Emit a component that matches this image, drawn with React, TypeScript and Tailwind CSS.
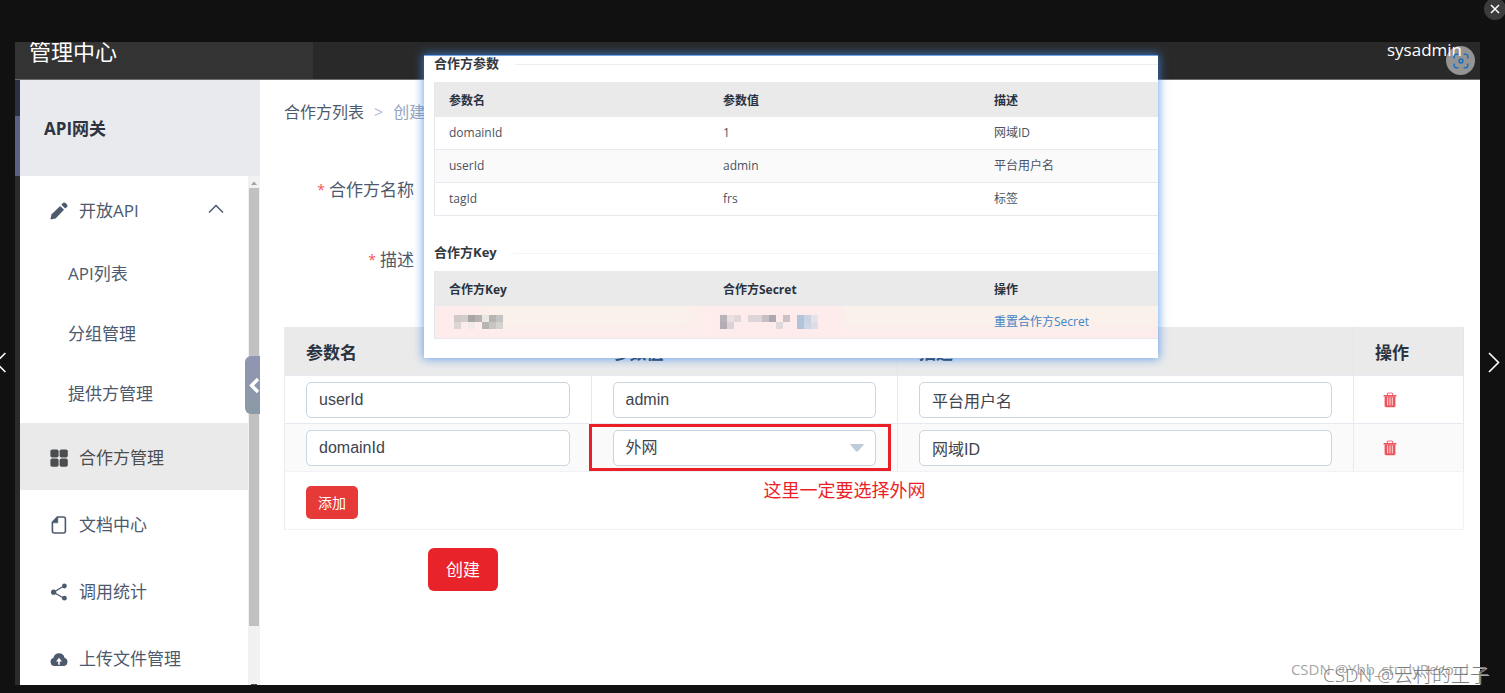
import React, { useState } from 'react';

interface Param {
  name: string;
  value: string;
  desc: string;
}

const SANS = "font-['Open_Sans','Noto_Sans_CJK_SC',sans-serif]";
const FIELD =
  "block w-full h-9 rounded-[5px] border border-[#c9d5e1] bg-white px-3 text-base text-[#40444d] outline-none font-['Liberation_Sans','Noto_Sans_CJK_SC',sans-serif]";

const SUB_ITEMS = ['API列表', '分组管理', '提供方管理'];

const PARTNER_PARAMS: Param[] = [
  { name: 'domainId', value: '1', desc: '网域ID' },
  { name: 'userId', value: 'admin', desc: '平台用户名' },
  { name: 'tagId', value: 'frs', desc: '标签' },
];

// [column, row, colour] of each masked cell
const KEY_MASK: [number, number, string][] = [
  [0, 0, '#d2c8ca'], [1, 0, '#d4cdce'], [2, 0, '#a7a6a5'], [3, 0, '#b5b3b2'], [4, 0, '#ebe7e2'], [5, 0, '#b5b4b3'], [6, 0, '#c5c4c2'],
  [0, 1, '#dcd5d6'], [2, 1, '#f0ebe9'], [4, 1, '#b6b5b1'], [5, 1, '#c8c5c2'], [6, 1, '#d5d3cf'],
];

const SECRET_MASK: [number, number, string][] = [
  [0, 0, '#b9b2b8'], [1, 0, '#ebdfe1'], [2, 0, '#e2d8da'], [4, 0, '#dfd4d7'], [5, 0, '#dfd4d7'], [6, 0, '#c6bfc5'], [7, 0, '#aaa8b0'],
  [9, 0, '#c9c1c6'], [11, 0, '#b2c4dc'], [12, 0, '#c9d3e4'], [13, 0, '#e6e2ea'],
  [0, 1, '#b5adb4'], [1, 1, '#dcd3d7'], [8, 1, '#e1d8dc'], [11, 1, '#b2c4dc'], [12, 1, '#cfd6e6'], [13, 1, '#dddde8'],
];

function Mask({ cells, cols, className }: { cells: [number, number, string][]; cols: number; className: string }) {
  return (
    <svg className={className} width={cols * 7} height={14} viewBox={`0 0 ${cols * 7} 14`} aria-hidden="true">
      {cells.map(([x, y, fill]) => (
        <rect key={`${x}-${y}`} x={x * 7} y={y * 7} width={7} height={7} fill={fill} />
      ))}
    </svg>
  );
}

function PencilIcon() {
  return (
    <svg width="18" height="18" viewBox="0 0 18 18" fill="currentColor">
      <path d="M0.4 17.6l1-5.2L10.2 4l3.8 3.8L5.6 16.4z" />
      <path d="M11.4 2.8l1-1.2a2.4 2.4 0 0 1 3.6-.2l.6.6a2.4 2.4 0 0 1-.2 3.6l-1.2 1z" />
    </svg>
  );
}

function GridIcon() {
  return (
    <svg width="18" height="18" viewBox="0 0 18 18" fill="currentColor">
      <rect x="0.4" y="0.4" width="8.2" height="8.2" rx="1.8" />
      <rect x="9.6" y="0.4" width="8.2" height="8.2" rx="1.8" />
      <rect x="0.4" y="9.6" width="8.2" height="8.2" rx="1.8" />
      <rect x="9.6" y="9.6" width="8.2" height="8.2" rx="1.8" />
    </svg>
  );
}

function DocIcon() {
  return (
    <svg width="18" height="18" viewBox="0 0 18 18" fill="none" stroke="currentColor" strokeWidth="1.6">
      <path d="M7.4 1h6a2 2 0 0 1 2 2v12a2 2 0 0 1-2 2H4.4a2 2 0 0 1-2-2V6.4z" />
      <path d="M7.8 1v5.8H2.2z" fill="currentColor" strokeWidth="0.6" />
    </svg>
  );
}

function ShareIcon() {
  return (
    <svg width="18" height="18" viewBox="0 0 18 18" fill="currentColor">
      <path d="M14 3L3.6 9.2 14 15.2" fill="none" stroke="currentColor" strokeWidth="1.3" />
      <circle cx="14.4" cy="3" r="2.4" />
      <circle cx="3.6" cy="9.2" r="2.6" />
      <circle cx="14.4" cy="15.2" r="2.4" />
    </svg>
  );
}

function CloudIcon() {
  return (
    <svg width="18" height="18" viewBox="0 0 18 18">
      <path d="M4.4 16a4.2 4.2 0 0 1-.9-8.2 5.6 5.6 0 0 1 11 0 4.2 4.2 0 0 1-.9 8.2z" fill="currentColor" />
      <path d="M9 7.8l3 3.8h-2.2v3.2H8.2v-3.2H6z" fill="#fff" />
    </svg>
  );
}

function TrashIcon() {
  return (
    <svg width="14" height="16" viewBox="0 0 14 16" fill="none">
      <path d="M4.4 3.2V1.9a.9.9 0 0 1 .9-.9h3.4a.9.9 0 0 1 .9.9v1.3" stroke="#f2707a" strokeWidth="1.2" />
      <path d="M0.6 3h12.8v1.6H0.6z" fill="#ef5561" />
      <path d="M1.6 4.5h10.8v9.2a1.6 1.6 0 0 1-1.6 1.6H3.2a1.6 1.6 0 0 1-1.6-1.6z" fill="#ef5561" />
      <path d="M4.7 5.4v8M7 5.4v8M9.3 5.4v8" stroke="#fbdcd8" strokeWidth="1" />
    </svg>
  );
}

const MENU = [
  { label: '合作方管理', icon: <GridIcon />, active: true },
  { label: '文档中心', icon: <DocIcon />, active: false },
  { label: '调用统计', icon: <ShareIcon />, active: false },
  { label: '上传文件管理', icon: <CloudIcon />, active: false },
];

function Sidebar() {
  return (
    <aside className="relative flex w-60 shrink-0 flex-col bg-white text-[17px] text-[#4d5a6e]">
      <div className="flex h-24 shrink-0 items-center bg-[#e9eaee] px-6 pt-0.5 font-bold text-[#2d3440]">API网关</div>
      <div className="flex min-h-0 flex-1">
        <nav className="min-w-0 flex-1 overflow-hidden">
          <button type="button" className="flex h-[67px] w-full items-center gap-[11px] pl-[30px] pr-6 pt-0.5">
            <PencilIcon />
            <span>开放API</span>
            <svg className="mb-1 ml-auto" width="16" height="10" viewBox="0 0 16 10" fill="none" stroke="#4d5a6e" strokeWidth="1.5">
              <path d="M1 8.5L8 1.5l7 7" />
            </svg>
          </button>
          {SUB_ITEMS.map(item => (
            <a key={item} href="#" className="flex h-[60px] items-center pl-12 pt-0.5">{item}</a>
          ))}
          {MENU.map(item => (
            <a
              key={item.label}
              href="#"
              className={`flex h-[67px] items-center gap-[11px] pl-[30px] pt-0.5 ${item.active ? 'bg-[#eaeaea] text-[#4b4d50]' : ''}`}
            >
              {item.icon}
              <span>{item.label}</span>
            </a>
          ))}
        </nav>
        {/* Scrollbar */}
        <div className="flex w-3 shrink-0 flex-col items-center bg-[#f1f1f1]">
          <svg className="shrink-0" width="12" height="12" viewBox="0 0 12 12">
            <path d="M3 9l3-3.6L9 9z" fill="#a3a3a3" />
          </svg>
          <div className="h-[86%] w-2.5 bg-[#c1c1c1]" />
          <div className="mt-auto h-px w-1.5 bg-[#505050]" />
        </div>
      </div>
      {/* Collapse handle */}
      <button
        type="button"
        aria-label="收起"
        className="absolute right-0 top-[276px] flex h-[58px] w-[15px] items-center justify-end rounded-l-md bg-linear-to-b from-[#9095b2] to-[#8b9aa6]"
      >
        <svg width="12" height="18" viewBox="0 0 12 18" fill="none" stroke="#fff" strokeWidth="3.4">
          <path d="M10 3L3.6 9.5l6.4 6.5" />
        </svg>
      </button>
    </aside>
  );
}

function ParamTable() {
  const [network, setNetwork] = useState('外网');
  const th = 'h-12 pl-[21px] pt-1 font-bold';
  const cell = 'h-12 border-r border-t border-[#e4eaf0] pb-0 pl-[21px] pr-[21px] pt-px';

  return (
    <table className="w-full table-fixed border-separate border-spacing-0 border-l border-[#e9edf2] text-left">
      <colgroup>
        <col className="w-[26%]" />
        <col className="w-[26%]" />
        <col />
        <col className="w-[110px]" />
      </colgroup>
      <thead className="bg-[#eaeaea] text-[17px] text-[#2a3342]">
        <tr>
          <th className={th}>参数名</th>
          <th className={`${th} border-r border-[#e0e5ec]`}>参数值</th>
          <th className={`${th} border-r border-[#e0e5ec]`}>描述</th>
          <th className={`${th} border-r border-[#e0e5ec]`}>操作</th>
        </tr>
      </thead>
      <tbody>
        <tr>
          <td className={cell}><input aria-label="参数名" className={FIELD} defaultValue="userId" /></td>
          <td className={cell}><input aria-label="参数值" className={FIELD} defaultValue="admin" /></td>
          <td className={cell}><input aria-label="描述" className={FIELD} defaultValue="平台用户名" /></td>
          <td className={cell}>
            <button type="button" aria-label="删除" className="ml-2 block"><TrashIcon /></button>
          </td>
        </tr>
        <tr className="bg-[#fafafa]">
          <td className={cell}><input aria-label="参数名" className={FIELD} defaultValue="domainId" /></td>
          <td className={`relative ${cell}`}>
            <div className="relative">
              <select
                aria-label="参数值"
                className={`${FIELD} appearance-none`}
                value={network}
                onChange={e => setNetwork(e.target.value)}
              >
                <option>外网</option>
              </select>
              <svg className="pointer-events-none absolute right-3 top-3.5" width="14" height="8" viewBox="0 0 14 8">
                <path d="M0.6 0h12.8q.6.4.2 1L8 7.2q-1 .9-2 0L.4 1q-.4-.6.2-1z" fill="#bfcbd9" />
              </svg>
            </div>
            {/* Callout */}
            <div className="pointer-events-none absolute inset-y-0 -left-[3px] right-1.5 border-[3px] border-[#ea1f27]" />
            <p className="absolute left-[172px] top-full mt-[7px] whitespace-nowrap text-lg leading-6 text-[#ea1f27]">这里一定要选择外网</p>
          </td>
          <td className={cell}><input aria-label="描述" className={FIELD} defaultValue="网域ID" /></td>
          <td className={cell}>
            <button type="button" aria-label="删除" className="ml-2 block"><TrashIcon /></button>
          </td>
        </tr>
      </tbody>
      <tfoot>
        <tr>
          <td colSpan={4} className="border border-l-0 border-[#f0f2f5] pb-2.5 pl-[21px] pt-3.5">
            <button type="button" className="block h-[33px] rounded-[5px] bg-[#e53a38] px-3 text-sm text-white">添加</button>
          </td>
        </tr>
      </tfoot>
    </table>
  );
}

function PartnerPopup() {
  const table = 'w-full table-fixed border-separate border-spacing-0 border-l border-[#e4e8ec] text-left';
  const th = 'h-[35px] pl-3.5 pt-0.5 font-bold';
  const td = 'h-[33px] border-b border-[#e6eaee] pl-3.5';

  return (
    <section className="absolute left-[424px] top-[55px] w-[734px] overflow-hidden border-t border-[#6da3e8] bg-white pb-[19px] pl-2.5 text-xs text-[#4a5361] shadow-[0_0_9px_1px_rgba(64,140,235,0.75)]">
      <div className="flex h-4 items-center gap-4">
        <h2 className="text-[13px] font-bold text-[#33373e]">合作方参数</h2>
        <div className="h-px flex-1 bg-[#eceff2]" />
      </div>
      <table className={`mt-2.5 ${table}`}>
        <colgroup>
          <col className="w-[274px]" />
          <col className="w-[271px]" />
          <col />
        </colgroup>
        <thead className="bg-[#eaeaea] text-[#2a3342]">
          <tr>
            <th className={th}>参数名</th>
            <th className={th}>参数值</th>
            <th className={th}>描述</th>
          </tr>
        </thead>
        <tbody>
          {PARTNER_PARAMS.map(p => (
            <tr key={p.name} className="even:bg-[#fafafa]">
              <td className={td}>{p.name}</td>
              <td className={td}>{p.value}</td>
              <td className={td}>{p.desc}</td>
            </tr>
          ))}
        </tbody>
      </table>
      <div className="mt-[29px] flex h-4 items-center gap-4">
        <h2 className="text-[13px] font-bold text-[#33373e]">合作方Key</h2>
        <div className="h-px flex-1 bg-[#f3f4f5]" />
      </div>
      <table className={`mt-2.5 ${table}`}>
        <colgroup>
          <col className="w-[274px]" />
          <col className="w-[271px]" />
          <col />
        </colgroup>
        <thead className="bg-[#eaeaea] text-[#2a3342]">
          <tr>
            <th className={th}>合作方Key</th>
            <th className={th}>合作方Secret</th>
            <th className={th}>操作</th>
          </tr>
        </thead>
        <tbody>
          <tr className="bg-[linear-gradient(to_bottom,transparent_45%,#fdeceb_85%),linear-gradient(to_right,#fdeceb_5%,#faf1ea_9%,#faf1ea_34%,#fdeceb_38%,#fdeceb_56%,#faf1ea_57%)]">
            <td className={td}><Mask cells={KEY_MASK} cols={7} className="ml-[5px]" /></td>
            <td className={td}><Mask cells={SECRET_MASK} cols={14} className="-ml-[3px]" /></td>
            <td className={td}><a href="#" className="text-[#4683c4]">重置合作方Secret</a></td>
          </tr>
        </tbody>
      </table>
    </section>
  );
}

export default function App() {
  return (
    <div className={`relative flex h-screen flex-col overflow-hidden bg-[#111] pb-2 pl-[15px] pr-[25px] pt-[42px] ${SANS}`}>
      <header className="flex h-[38px] shrink-0 justify-between overflow-hidden border-b border-[#6b6b6b] bg-[#292929] text-white">
        <div className="w-[298px] bg-[#333] pl-3.5">
          <h1 className="text-[22px] leading-[18px]">管理中心</h1>
        </div>
        <span className="pr-[18px] text-[17px] font-medium leading-4">sysadmin</span>
      </header>

      <div className="flex min-h-0 flex-1">
        <div className="flex w-[5px] shrink-0 flex-col bg-[#2b2b2b]">
          <div className="h-9 bg-[#2d3042]" />
          <div className="h-[60px] bg-[#5b6184]" />
        </div>
        <Sidebar />
        <main className="min-w-0 flex-1 bg-white pl-6 pr-4 pt-5">
          <nav className="flex h-6 items-center gap-2.5 text-base text-[#4d5a6e]">
            <a href="#">合作方列表</a>
            <span className="text-[#b4c0cf]">&gt;</span>
            <span className="text-[#95a5bb]">创建</span>
          </nav>
          <div className="mt-[31px] w-[130px] text-right text-[17px] text-[#4d5a6e]">
            <div className="flex h-[70px] items-center justify-end gap-1">
              <span className="text-sm text-[#f5545c]">*</span>合作方名称
            </div>
            <div className="flex h-[70px] items-center justify-end gap-1">
              <span className="text-sm text-[#f5545c]">*</span>描述
            </div>
          </div>
          <div className="mt-8">
            <ParamTable />
          </div>
          <button type="button" className="ml-36 mt-[18px] block h-[43px] rounded-md bg-[#e8242a] px-[18px] text-[17px] text-white">创建</button>
        </main>
      </div>

      <PartnerPopup />

      {/* Viewer controls */}
      <button type="button" aria-label="搜索图片" className="absolute right-[30px] top-[46px] flex size-[29px] items-center justify-center rounded-full bg-white/50">
        <svg width="16" height="16" viewBox="0 0 16 16" fill="none" stroke="#1a6fc0" strokeWidth="1.5">
          <path d="M1.2 5.4V3.4a2.2 2.2 0 0 1 2.2-2.2h2M10.6 1.2h2a2.2 2.2 0 0 1 2.2 2.2v2M14.8 10.6v2a2.2 2.2 0 0 1-2.2 2.2h-2M5.4 14.8h-2a2.2 2.2 0 0 1-2.2-2.2v-2" />
          <circle cx="8" cy="8" r="1.9" />
        </svg>
      </button>
      <button type="button" aria-label="关闭" className="absolute -right-px -top-0.5 flex size-[22px] items-center justify-center rounded-full bg-[#3b3b3b]">
        <svg width="10" height="10" viewBox="0 0 10 10" stroke="#fff" strokeWidth="1.5">
          <path d="M1 1l8 8M9 1L1 9" />
        </svg>
      </button>
      <button type="button" aria-label="上一张" className="absolute left-0 top-[352px]">
        <svg width="6" height="21" viewBox="0 0 6 21" fill="none" stroke="#fff" strokeWidth="1.6">
          <path d="M5.4 1L-4 10.5 5.4 20" />
        </svg>
      </button>
      <button type="button" aria-label="下一张" className="absolute right-[5px] top-[352px]">
        <svg width="12" height="21" viewBox="0 0 12 21" fill="none" stroke="#fff" strokeWidth="1.6">
          <path d="M1 1l9.5 9.5L1 20" />
        </svg>
      </button>

      <span className="absolute bottom-3.5 right-9 text-[15px] leading-5 text-[#a6a6a6]">CSDN @Ybb_studyRecord</span>
      <span className="absolute bottom-1.5 right-4 text-[19px] font-light leading-6 text-[#7d7d7d] [text-shadow:1px_1px_0_#ffffffa0]">CSDN @云村的王子</span>
    </div>
  );
}
